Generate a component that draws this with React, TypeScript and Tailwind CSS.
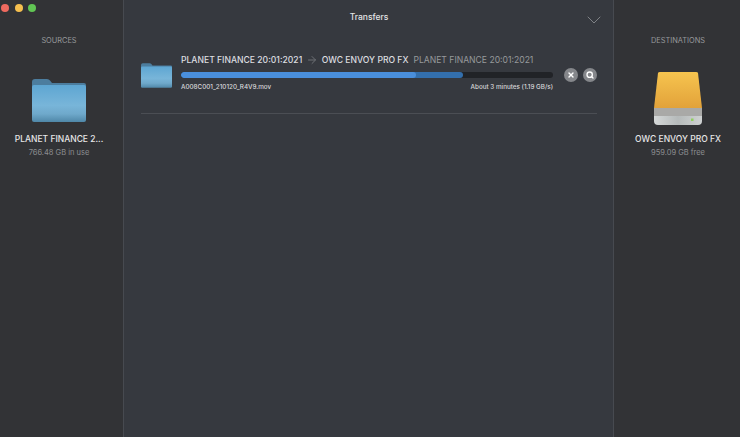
import { X, Search, ChevronDown, ArrowRight } from "lucide-react";

function FolderIcon({ className, id }: { className: string; id: string }) {
  return (
    <svg viewBox="0 0 54 43" className={className}>
      <defs>
        <linearGradient id={id} x1="0" y1="0" x2="0" y2="1">
          <stop offset="0" stopColor="#5ea6d2" />
          <stop offset="0.55" stopColor="#78b5d9" />
          <stop offset="0.78" stopColor="#6fa9cb" />
          <stop offset="1" stopColor="#4f87a8" />
        </linearGradient>
      </defs>
      <path d="M0 3 Q0 0 3 0 H15 Q17 0 18 1.5 L20 4 H52 Q54 4 54 6 V14 H0 Z" fill="#4c7d9e" />
      <path d="M0 8 Q0 6 2 6 H52 Q54 6 54 8 V41 Q54 43 52 43 H2 Q0 43 0 41 Z" fill={`url(#${id})`} />
    </svg>
  );
}

function DriveIcon() {
  return (
    <svg viewBox="0 0 50 56" className="h-[56px] w-[50px]">
      <defs>
        <linearGradient id="driveTop" x1="0" y1="0" x2="0" y2="1">
          <stop offset="0" stopColor="#f6c44f" />
          <stop offset="1" stopColor="#e2a23a" />
        </linearGradient>
        <linearGradient id="driveBase" x1="0" y1="0" x2="1" y2="0">
          <stop offset="0" stopColor="#d5d8d8" />
          <stop offset="0.5" stopColor="#b5baba" />
          <stop offset="1" stopColor="#cfd2d2" />
        </linearGradient>
      </defs>
      <path d="M5 4 Q5.3 3 7 3 H43 Q44.7 3 45 4 L49 39 H1 Z" fill="url(#driveTop)" />
      <path d="M1 39 H49 V47 H1 Z" fill="#a9a9a7" />
      <path d="M1 47 H49 V52 Q49 56 45 56 H5 Q1 56 1 52 Z" fill="url(#driveBase)" />
      <rect x="38" y="49.5" width="2.5" height="2.5" fill="#8fd05f" />
    </svg>
  );
}

function Volume({ heading, name, usage, icon }: { heading: string; name: string; usage: string; icon: React.ReactNode }) {
  return (
    <div className="flex flex-col items-center">
      <div className="mt-[36px] text-[7.4px] leading-[10px] text-[#97999c]">{heading}</div>
      <div className="mt-[23px] flex h-[56px] items-end justify-center">{icon}</div>
      <div className="mt-[8px] text-[8.5px] leading-[12px] font-medium whitespace-nowrap text-[#e6e6e7]">{name}</div>
      <div className="mt-[3px] text-[7.5px] leading-[10px] text-[#8c8e91]">{usage}</div>
    </div>
  );
}

export default function App() {
  return (
    <div className="flex h-[437px] w-[740px] overflow-hidden bg-[#36393f] font-['Inter','Liberation_Sans',sans-serif]">
      {/* left pane */}
      <aside className="relative w-[123px] shrink-0 bg-[#323336] pr-[5px]">
        <div className="absolute top-[4px] left-[1px] flex gap-[5.5px]">
          <span className="h-[8px] w-[8px] rounded-full bg-[#ee6a5f]" />
          <span className="h-[8px] w-[8px] rounded-full bg-[#f5bf4f]" />
          <span className="h-[8px] w-[8px] rounded-full bg-[#61c554]" />
        </div>
        <Volume
          heading="SOURCES"
          name="PLANET FINANCE 2..."
          usage="766.48 GB in use"
          icon={<FolderIcon id="srcFolder" className="mb-[3px] h-[43px] w-[54px]" />}
        />
      </aside>

      {/* transfers */}
      <main className="flex min-w-0 flex-1 flex-col border-x border-[#474a50] pr-[16px] pl-[17px]">
        <header className="relative flex h-[34px] items-center justify-center">
          <span className="text-[8.5px] font-medium text-[#e4e5e6]">Transfers</span>
          <ChevronDown className="absolute top-[8px] right-[-9px] h-[24px] w-[24px] text-[#7f8286]" strokeWidth={1} />
        </header>
        <div className="flex h-[80px] items-start border-b border-[#4b4e54] pt-[20px]">
          <FolderIcon id="rowFolder" className="mt-[9px] h-[25px] w-[31px] shrink-0" />
          <div className="ml-[9px] w-[372px] shrink-0">
            <div className="flex items-center text-[8.6px] leading-[12px] font-medium whitespace-nowrap text-[#dddee0]">
              <span>PLANET FINANCE 20:01:2021</span>
              <ArrowRight className="mr-[3.5px] ml-[4px] h-[12px] w-[12px] text-[#6d7075]" strokeWidth={2} />
              <span>OWC ENVOY PRO FX</span>
              <span className="ml-[5px] font-normal text-[#97999c]">PLANET FINANCE 20:01:2021</span>
            </div>
            <div className="mt-[6px] h-[6px] overflow-hidden rounded-full bg-[#212327]">
              <div className="flex h-full w-[282px] rounded-full bg-[#336fad]">
                <div className="h-full w-[235px] rounded-full bg-[#4a8fdc]" />
              </div>
            </div>
            <div className="mt-[5px] flex justify-between text-[6.3px] leading-[9px] font-medium text-[#d6d7d9]">
              <span>A008C001_210120_R4V9.mov</span>
              <span>About 3 minutes (1.19 GB/s)</span>
            </div>
          </div>
          <div className="mt-[14px] ml-[11px] flex items-center gap-[5px]">
            <button className="flex h-[14px] w-[14px] items-center justify-center rounded-full bg-[#85878b] text-white">
              <X className="h-[8px] w-[8px]" strokeWidth={4} />
            </button>
            <button className="flex h-[14px] w-[14px] items-center justify-center rounded-full bg-[#85878b] text-white">
              <Search className="h-[8px] w-[8px]" strokeWidth={4} />
            </button>
          </div>
        </div>
      </main>

      {/* right pane */}
      <aside className="w-[126px] shrink-0 bg-[#323336] pl-[2px]">
        <Volume heading="DESTINATIONS" name="OWC ENVOY PRO FX" usage="959.09 GB free" icon={<DriveIcon />} />
      </aside>
    </div>
  );
}
